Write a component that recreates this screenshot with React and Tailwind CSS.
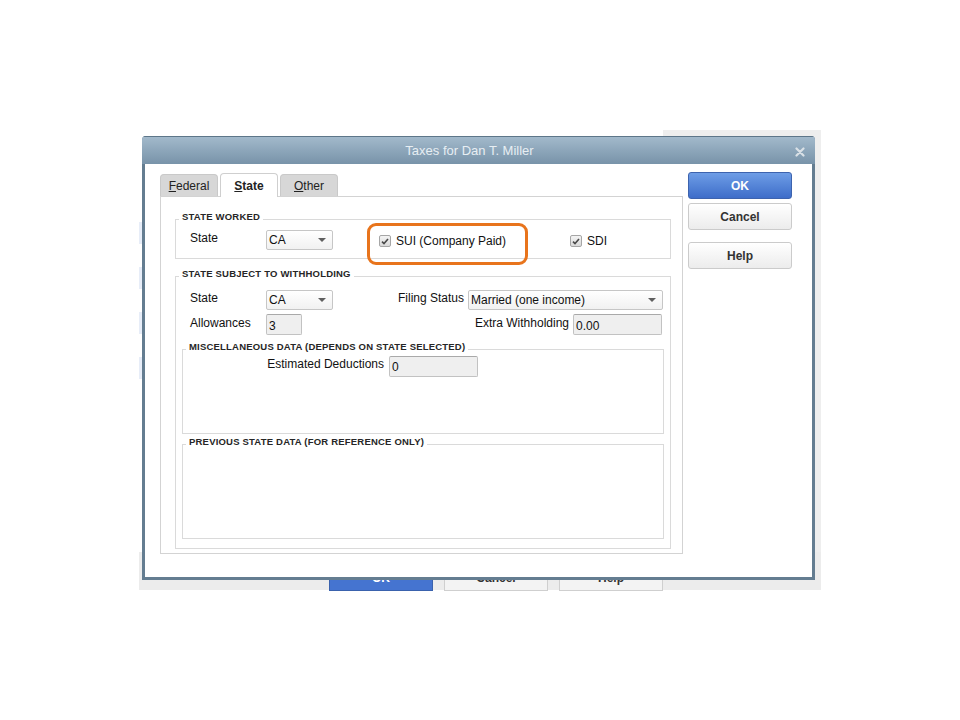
const sans = "font-['Liberation_Sans',Arial,sans-serif]"

function Arrow() {
  return (
    <svg width="8" height="4" viewBox="0 0 8 4" className="shrink-0">
      <path d="M0 0h8L4 4z" fill="#5f5f5f" />
    </svg>
  )
}

function Select({ value, width }) {
  return (
    <div
      className="flex h-[20px] items-center justify-between rounded-[2px] border border-[#c6c6c6] bg-linear-to-b from-white to-[#f1f1f1] pl-[2px] pr-[6px] text-[12px] text-[#111]"
      style={{ width }}
    >
      <span>{value}</span>
      <Arrow />
    </div>
  )
}

function Field({ value, width }) {
  return (
    <div
      className="flex h-[21px] items-center rounded-[2px] border border-[#c2c2c2] border-t-[#a9a9a9] bg-[#efefef] pl-[2px] pt-[2px] text-[12px] text-[#111]"
      style={{ width }}
    >
      {value}
    </div>
  )
}

function Check({ label }) {
  return (
    <label className="flex items-center gap-[5px] text-[12px] text-[#111]">
      <span className="grid h-[12px] w-[12px] place-items-center rounded-[2px] border border-[#a6a6a6] bg-linear-to-b from-[#f4f4f4] to-[#d9d9d9]">
        <svg width="8" height="7" viewBox="0 0 8 7">
          <path d="M1 3.6l2 2L7 1" fill="none" stroke="#4a4a4a" strokeWidth="1.6" />
        </svg>
      </span>
      {label}
    </label>
  )
}

function Group({ title, className = '', children }) {
  return (
    <fieldset className={`border border-[#dadada] ${className}`}>
      <legend className="ml-[3px] px-[3px] pb-[4px] text-[9.5px] font-bold leading-[12px] tracking-[0.2px] text-[#262626]">{title}</legend>
      {children}
    </fieldset>
  )
}

function SideButton({ children, primary }) {
  return (
    <button
      className={`h-[27px] w-[104px] rounded-[3px] border text-[12px] font-bold ${
        primary
          ? 'border-[#3d63ae] bg-linear-to-b from-[#6e9de6] to-[#3e6dc9] text-white'
          : 'border-[#cbcbcb] bg-linear-to-b from-white to-[#ececec] text-[#333]'
      }`}
    >
      {children}
    </button>
  )
}

function Tab({ children, active }) {
  return (
    <div
      className={`flex w-[58px] items-center justify-center rounded-t-[4px] border border-b-0 text-[12px] text-[#222] ${
        active ? 'relative z-10 -mb-px h-[24px] border-[#cfcfcf] bg-white font-bold' : 'h-[22px] border-[#c9c9c9] bg-[#d7d7d7]'
      }`}
    >
      {children}
    </div>
  )
}

function Backdrop() {
  return (
    <div className="absolute left-[139px] top-[130px] flex h-[460px] w-[682px] flex-col">
      <div className="flex flex-1">
        <div className="flex w-[524px] flex-col gap-[23px] pt-[92px]">
          <div className="h-[22px] w-[3px] bg-[#e7edf8]" />
          <div className="h-[22px] w-[3px] bg-[#e7edf8]" />
          <div className="h-[22px] w-[3px] bg-[#e7edf8]" />
          <div className="h-[22px] w-[3px] bg-[#e7edf8]" />
        </div>
        <div className="w-[158px] bg-[#eeeeee]" />
      </div>
      <div className="flex h-[38px] gap-[11px] bg-[#ececec] pl-[190px] pt-[13px]">
        <div className="flex h-[26px] w-[104px] items-center justify-center border border-[#3a62ad] bg-[#4574d0] text-[12px] font-bold text-white">OK</div>
        <div className="flex h-[26px] w-[104px] items-center justify-center border border-[#cfcfcf] bg-[#f3f3f3] text-[12px] font-bold text-[#333]">Cancel</div>
        <div className="flex h-[26px] w-[104px] items-center justify-center border border-[#cfcfcf] bg-[#f3f3f3] text-[12px] font-bold text-[#333]">Help</div>
      </div>
    </div>
  )
}

export default function App() {
  return (
    <div className={`relative h-[720px] w-[960px] overflow-hidden bg-white ${sans}`}>
      <Backdrop />

      <div className="absolute left-[142px] top-[136px] flex h-[444px] w-[673px] flex-col overflow-hidden rounded-t-[4px] bg-[#647d91]">
        <div className="relative flex h-[28px] shrink-0 items-center justify-center border-t border-[#5d7689] bg-linear-to-b from-[#a2b9cb] to-[#7893a9] pr-[18px] text-[13px] text-[#e7eef3]">
          Taxes for Dan T. Miller
          <svg width="10" height="10" viewBox="0 0 10 10" className="absolute right-[10px] top-[10px]">
            <path d="M1.5 1.5l7 7M8.5 1.5l-7 7" stroke="#d9e0e6" strokeWidth="2.2" strokeLinecap="round" />
          </svg>
        </div>

        <div className="mx-[3px] mb-[3px] flex flex-1 bg-white pl-[15px] pt-[8px]">
          <div className="flex w-[523px] flex-col pt-px">
            <div className="flex h-[23px] items-end gap-[2px]">
              <Tab><span><u>F</u>ederal</span></Tab>
              <Tab active><span><u>S</u>tate</span></Tab>
              <Tab><span><u>O</u>ther</span></Tab>
            </div>

            <div className="h-[358px] border border-[#d3d3d3] pl-[14px] pr-[11px] pt-[14px]">
              <Group title="STATE WORKED">
                <div className="flex h-[20px] items-center pl-[14px] text-[12px] text-[#111]" style={{ boxSizing: 'content-box', paddingTop: 3, paddingBottom: 8 }}>
                  <span className="mb-[5px] w-[76px]">State</span>
                  <Select value="CA" width={67} />
                  <div className="ml-[46px] mt-[2px]"><Check label="SUI (Company Paid)" /></div>
                  <div className="ml-[64px] mt-[2px]"><Check label="SDI" /></div>
                </div>
              </Group>

              <Group title="STATE SUBJECT TO WITHHOLDING" className="mt-[9px] h-[281px]">
                <div className="px-[6px] pb-[9px]">
                  <div className="flex flex-col gap-[4px] pl-[8px] pr-px pt-[5px] text-[12px] text-[#111]">
                    <div className="flex h-[21px] items-center justify-between">
                      <div className="flex items-center">
                        <span className="mb-[4px] w-[76px]">State</span>
                        <Select value="CA" width={67} />
                      </div>
                      <div className="flex items-center gap-[4px]">
                        <span className="mb-[3px]">Filing Status</span>
                        <Select value="Married (one income)" width={195} />
                      </div>
                    </div>
                    <div className="flex h-[21px] items-center justify-between pr-px">
                      <div className="flex items-center">
                        <span className="mb-[4px] w-[76px]">Allowances</span>
                        <Field value="3" width={36} />
                      </div>
                      <div className="flex items-center gap-[4px]">
                        <span className="mb-[4px]">Extra Withholding</span>
                        <Field value="0.00" width={89} />
                      </div>
                    </div>
                  </div>

                  <Group title="MISCELLANEOUS DATA (DEPENDS ON STATE SELECTED)" className="mt-[6px] h-[93px]">
                    <div className="-mt-[2px] flex items-center text-[12px] text-[#111]">
                      <span className="mb-[4px] w-[201px] text-right">Estimated Deductions</span>
                      <div className="ml-[5px]"><Field value="0" width={89} /></div>
                    </div>
                  </Group>

                  <Group title="PREVIOUS STATE DATA (FOR REFERENCE ONLY)" className="mt-[2px] h-[103px]" />
                </div>
              </Group>
            </div>
          </div>

          <div className="ml-[5px] flex flex-col">
            <SideButton primary>OK</SideButton>
            <div className="mt-[4px]"><SideButton>Cancel</SideButton></div>
            <div className="mt-[12px]"><SideButton>Help</SideButton></div>
          </div>
        </div>
      </div>

      <div className="pointer-events-none absolute left-[367px] top-[223px] h-[42px] w-[161px] rounded-[9px] border-[3px] border-[#e8741c]" />
    </div>
  )
}
